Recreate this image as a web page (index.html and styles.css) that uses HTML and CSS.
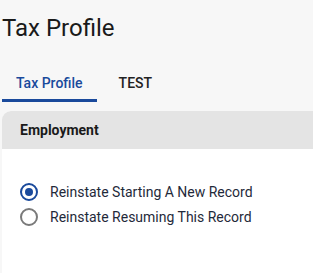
FILE: index.html
```html
<!DOCTYPE html>
<html lang="en">
<head>
    <meta charset="UTF-8">
    <meta name="viewport" content="width=device-width, initial-scale=1.0">
    <title>Tax Profile</title>
    <link rel="stylesheet" href="styles.css">
</head>
<body>
    <div class="page">
        <h1 class="title">Tax Profile</h1>

        <div class="tabs">
            <div class="tab active">Tax Profile</div>
            <div class="tab">TEST</div>
        </div>

        <div class="card">
            <div class="card-header">Employment</div>
            <div class="card-body">
                <label class="radio">
                    <input type="radio" name="reinstate" checked>
                    <span class="mark"></span>
                    Reinstate Starting A New Record
                </label>
                <label class="radio">
                    <input type="radio" name="reinstate">
                    <span class="mark"></span>
                    Reinstate Resuming This Record
                </label>
            </div>
        </div>
    </div>
</body>
</html>
```

FILE: styles.css
```css
body {
    margin: 0;
    font-family: Roboto, "Noto Sans", Arial, sans-serif;
    background-color: #f7f7f7;
    color: #222;
}
.page {
    padding: 0 0 0 2px;
    height: 273px;
    overflow: hidden;
}
.title {
    margin: 0;
    padding-top: 13px;
    font-size: 24px;
    font-weight: 400;
    line-height: 30px;
    color: #1a1a1a;
}
.tabs {
    display: flex;
    margin-top: 30px;
}
.tab {
    padding: 0 14px;
    font-size: 14px;
    font-weight: 500;
    line-height: 20px;
    height: 26px;
    border-bottom: 3px solid transparent;
    color: #222;
}
.tab.active {
    color: #1a4a9c;
    border-bottom-color: #1a4a9c;
}
.tab + .tab {
    padding-left: 22px;
}
.card {
    margin-top: 9px;
    background-color: white;
    border-top-left-radius: 9px;
    overflow: hidden;
    height: 200px;
}
.card-header {
    background-color: #e4e4e4;
    height: 38px;
    line-height: 38px;
    padding-left: 18px;
    font-size: 14px;
    font-weight: 700;
    color: #1a1a1a;
}
.card-body {
    padding: 34px 0 0 18px;
    display: flex;
    flex-direction: column;
    gap: 7px;
}
.radio {
    display: flex;
    align-items: center;
    gap: 12px;
    font-size: 14px;
    line-height: 18px;
    color: #1f2a3a;
    cursor: pointer;
}
.radio input {
    display: none;
}
.mark {
    width: 14px;
    height: 14px;
    border: 2px solid #7a7a7a;
    border-radius: 50%;
    position: relative;
    flex-shrink: 0;
}
.radio input:checked + .mark {
    border-color: #1a4a9c;
}
.radio input:checked + .mark::after {
    content: "";
    position: absolute;
    left: 3px;
    top: 3px;
    width: 8px;
    height: 8px;
    border-radius: 50%;
    background-color: #1a4a9c;
}
```
